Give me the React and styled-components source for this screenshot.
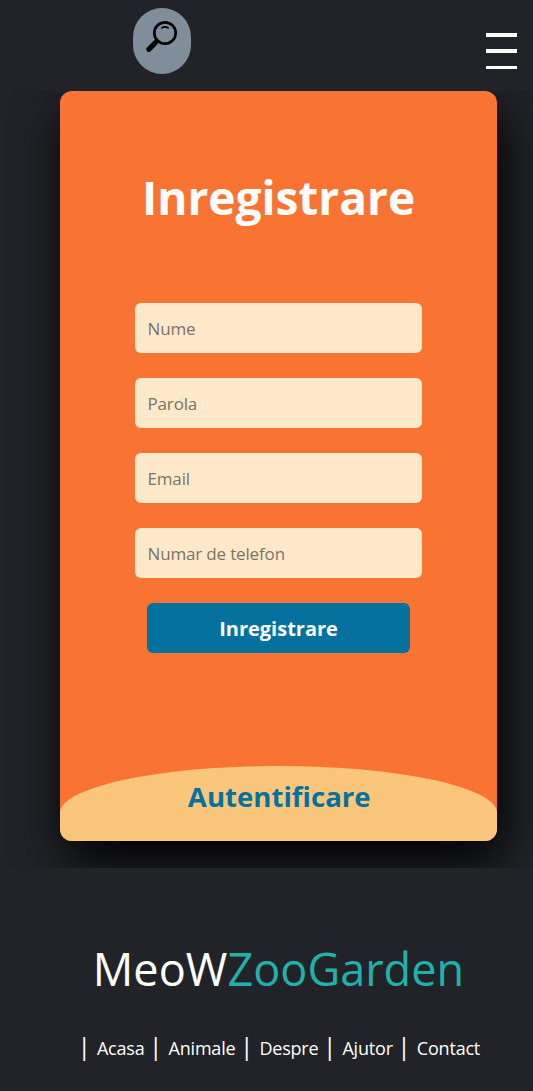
import React from "react";
import styled, { createGlobalStyle } from "styled-components";

const GlobalStyle = createGlobalStyle`
  * { box-sizing: border-box; }
  body {
    margin: 0;
    background: #222328;
    font-family: "Open Sans", "Noto Sans", sans-serif;
    color: #fff;
  }
`;

const Page = styled.div`
  display: flex;
  flex-direction: column;
  min-height: 1091px;
  overflow: hidden;
`;

const Header = styled.header`
  position: relative;
  z-index: 1;
  display: flex;
  justify-content: space-between;
  align-items: flex-start;
  height: 91px;
  padding: 8px 16px 0 133px;
  background: #222328;
`;

const SearchButton = styled.button`
  width: 58px;
  height: 66px;
  padding: 12px 0 0 12px;
  border: 0;
  border-radius: 29px;
  background: #808e9b;
  display: flex;
`;

const MenuButton = styled.button`
  display: flex;
  flex-direction: column;
  gap: 12px;
  margin-top: 25px;
  padding: 0;
  border: 0;
  background: none;
`;

const MenuLine = styled.span`
  width: 31px;
  height: 4px;
  background: #fff;
  &:last-child {
    height: 3px;
    margin-top: 1px;
  }
`;

const Main = styled.main`
  height: 777px;
  padding-left: 60px;
`;

const Card = styled.section`
  display: flex;
  flex-direction: column;
  width: 437px;
  height: 750px;
  overflow: hidden;
  border-radius: 12px;
  background: #f97432;
  box-shadow: 5px 20px 50px #000;
`;

const Form = styled.form`
  display: flex;
  flex-direction: column;
  align-items: center;
  height: 675px;
`;

const Title = styled.h1`
  margin: 74px 0 74px;
  font-size: 46px;
  line-height: 64px;
  font-weight: 700;
`;

const Input = styled.input`
  width: 287px;
  height: 50px;
  margin-bottom: 25px;
  padding: 0 12px 0 12.5px;
  border: 0;
  border-radius: 6px;
  background: #ffe9ca;
  font: 400 17px "Open Sans", sans-serif;
  letter-spacing: -0.16px;
  &::placeholder { color: #7b7267; opacity: 1; }
`;

const Submit = styled.button`
  width: 263px;
  height: 50px;
  padding: 0;
  border: 0;
  border-radius: 6px;
  background: #05719f;
  color: #fff;
  font: 700 20px "Open Sans", sans-serif;
`;

const LoginPanel = styled.div`
  flex: 1;
  padding: 11px 0 0 1.5px;
  border-radius: 50% 50% 0 0 / 47px 47px 0 0;
  background: #fac67c;
  color: #05719f;
  text-align: center;
  font-size: 27.6px;
  line-height: 39px;
  font-weight: 700;
`;

const Footer = styled.footer`
  position: relative;
  z-index: 1;
  flex: 1;
  display: flex;
  flex-direction: column;
  align-items: center;
  padding: 67px 0 0 24px;
  background: #222328;
`;

const Brand = styled.div`
  font-size: 45px;
  line-height: 67px;
  letter-spacing: 0.04px;
`;

const BrandAccent = styled.span`
  color: #20b2aa;
`;

const Links = styled.nav`
  display: flex;
  align-items: center;
  margin-top: 28px;
  padding-right: 4px;
`;

const Link = styled.a`
  display: flex;
  align-items: center;
  font-size: 18px;
  line-height: 36px;
  letter-spacing: -0.2px;
  &::before {
    content: "|";
    width: 13px;
    margin: -5px 6.5px 0 4.5px;
    font-size: 24.5px;
    letter-spacing: 0;
  }
`;

const fields = [
  ["Nume", "text"],
  ["Parola", "password"],
  ["Email", "email"],
  ["Numar de telefon", "tel"],
];
const links = ["Acasa", "Animale", "Despre", "Ajutor", "Contact"];

export default function App() {
  return (
    <Page>
      <GlobalStyle />
      <Header>
        <SearchButton type="button" aria-label="Cauta">
          <svg width="34" height="34" viewBox="0 0 34 34" fill="none" stroke="#000" strokeLinecap="round">
            <circle cx="20" cy="13" r="10.7" strokeWidth="2.7" />
            <path d="M16.8 7.9Q20 6 23.2 7.9" strokeWidth="1.8" />
            <path d="M12.2 20.8L10.5 22.5" strokeWidth="3" />
            <path d="M10.3 22.8L3.8 29.3" strokeWidth="5.2" />
          </svg>
        </SearchButton>
        <MenuButton type="button" aria-label="Meniu">
          <MenuLine />
          <MenuLine />
          <MenuLine />
        </MenuButton>
      </Header>
      <Main>
        <Card>
          <Form>
            <Title>Inregistrare</Title>
            {fields.map(([label, type]) => (
              <Input key={label} type={type} placeholder={label} />
            ))}
            <Submit type="button">Inregistrare</Submit>
          </Form>
          <LoginPanel>Autentificare</LoginPanel>
        </Card>
      </Main>
      <Footer>
        <Brand>
          MeoW<BrandAccent>ZooGarden</BrandAccent>
        </Brand>
        <Links>
          {links.map((label) => (
            <Link key={label}>{label}</Link>
          ))}
        </Links>
      </Footer>
    </Page>
  );
}
